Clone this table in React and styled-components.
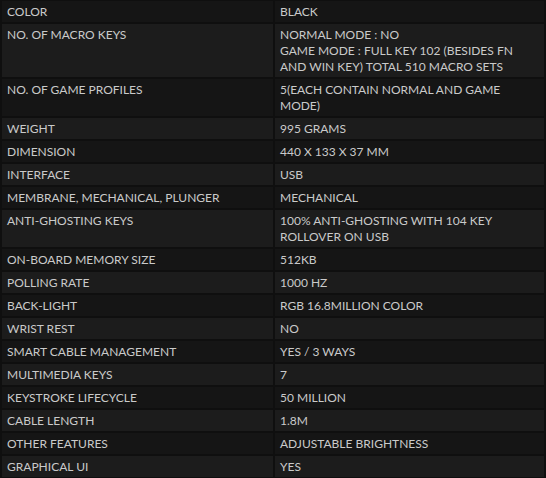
import React from 'react';
import styled, { createGlobalStyle } from 'styled-components';

const GlobalStyle = createGlobalStyle`
  html, body {
    margin: 0;
    padding: 0;
    background: #0f0f0f;
  }
`;

const SpecTable = styled.table`
  width: 546px;
  border-collapse: separate;
  border-spacing: 2px;
  margin: -1px 0 0 0;
  background: #0f0f0f;
  font-family: Lato, "Open Sans", sans-serif;
  font-size: 12px;
  line-height: 16px;
  color: #cacaca;
  text-transform: uppercase;
`;

const Row = styled.tr`
  background: ${props => (props.even ? '#1c1c1c' : '#151515')};
`;

const Cell = styled.td`
  vertical-align: top;
  padding: 3px 5px 2px 5px;
  width: ${props => (props.label ? '261px' : 'auto')};
`;

const specs = [
  ['Color', ['Black']],
  ['No. of macro keys', ['Normal mode : No', 'Game mode : Full key 102 (besides FN and Win key) total 510 macro sets']],
  ['No. of game profiles', ['5(Each contain normal and game mode)']],
  ['Weight', ['995 grams']],
  ['Dimension', ['440 x 133 x 37 mm']],
  ['Interface', ['USB']],
  ['Membrane, Mechanical, Plunger', ['Mechanical']],
  ['Anti-ghosting keys', ['100% anti-ghosting with 104 key rollover on USB']],
  ['On-board memory size', ['512KB']],
  ['Polling rate', ['1000 Hz']],
  ['Back-light', ['RGB 16.8million color']],
  ['Wrist rest', ['No']],
  ['Smart cable management', ['Yes / 3 ways']],
  ['Multimedia keys', ['7']],
  ['Keystroke lifecycle', ['50 million']],
  ['Cable length', ['1.8m']],
  ['Other features', ['Adjustable brightness']],
  ['Graphical UI', ['Yes']],
];

export default function App() {
  return (
    <>
      <GlobalStyle />
      <SpecTable>
        <tbody>
          {specs.map(([label, lines], i) => (
            <Row key={label} even={i % 2 === 1}>
              <Cell label>{label}</Cell>
              <Cell>
                {lines.map((line, j) => (
                  <div key={j}>{line}</div>
                ))}
              </Cell>
            </Row>
          ))}
        </tbody>
      </SpecTable>
    </>
  );
}
